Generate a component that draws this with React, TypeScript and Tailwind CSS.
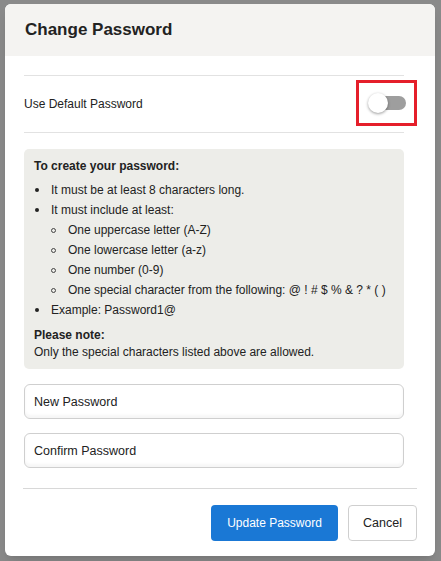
import { useState } from "react";

const rules: { text: string; level: 1 | 2 }[] = [
  { text: "It must be at least 8 characters long.", level: 1 },
  { text: "It must include at least:", level: 1 },
  { text: "One uppercase letter (A-Z)", level: 2 },
  { text: "One lowercase letter (a-z)", level: 2 },
  { text: "One number (0-9)", level: 2 },
  { text: "One special character from the following: @ ! # $ % & ? * ( )", level: 2 },
  { text: "Example: Password1@", level: 1 },
];

export default function App() {
  const [useDefault, setUseDefault] = useState(false);

  return (
    <div
      className="min-h-screen bg-[#8a8a8a] pt-[4px] pl-[5px]"
      style={{ fontFamily: '"Liberation Sans", Arial, sans-serif' }}
    >
      <div className="w-[430px] h-[552px] bg-white rounded-[6px] overflow-hidden flex flex-col shadow-lg">
        {/* Header */}
        <div className="h-[52px] shrink-0 bg-[#f4f3f1] flex items-center px-[20px]">
          <h2 className="text-[17px] font-bold text-[#222]">Change Password</h2>
        </div>

        {/* Body */}
        <div className="pl-[19px] pr-[31px] pt-[19px]">
          <div className="border-t border-b border-[#e2e2e2] h-[58px] flex items-center relative">
            <span className="text-[12px] text-[#222]">Use Default Password</span>
            <div className="absolute left-[332px] top-[4px] w-[61px] h-[46px] border-[3px] border-[#e51f2a] flex items-center justify-center">
              <button
                onClick={() => setUseDefault((v) => !v)}
                className="relative w-[35px] h-[14px] rounded-full bg-[#9e9e9e] ml-[4px]"
              >
                <span
                  className={`absolute top-1/2 -translate-y-1/2 w-[20px] h-[20px] rounded-full bg-white shadow-[0_1px_3px_rgba(0,0,0,0.4)] ${
                    useDefault ? "left-[22px]" : "left-[-3px]"
                  }`}
                />
              </button>
            </div>
          </div>

          {/* Rules */}
          <div className="mt-[16px] bg-[#edede9] rounded-[5px] px-[10px] pt-[9px] pb-[8px] text-[12px] text-[#222]">
            <div className="font-bold leading-[16px]">To create your password:</div>
            <ul className="mt-[6px]">
              {rules.map((r) => (
                <li key={r.text} className="flex items-center h-[20px]">
                  {r.level === 1 ? (
                    <span className="ml-[1px] mr-[12px] w-[4px] h-[4px] rounded-full bg-[#222]" />
                  ) : (
                    <span className="ml-[17px] mr-[12px] w-[5px] h-[5px] rounded-full border border-[#444]" />
                  )}
                  <span>{r.text}</span>
                </li>
              ))}
            </ul>
            <div className="mt-[7px] font-bold leading-[17px]">Please note:</div>
            <div className="leading-[17px]">Only the special characters listed above are allowed.</div>
          </div>

          {/* Inputs */}
          <input
            placeholder="New Password"
            className="mt-[15px] block w-full h-[35px] px-[9px] text-[12.5px] border border-[#cfcfcf] rounded-[6px] shadow-[inset_0_-3px_3px_rgba(0,0,0,0.04)] placeholder:text-[#222] outline-none"
          />
          <input
            placeholder="Confirm Password"
            className="mt-[14px] block w-full h-[35px] px-[9px] text-[12.5px] border border-[#cfcfcf] rounded-[6px] shadow-[inset_0_-3px_3px_rgba(0,0,0,0.04)] placeholder:text-[#222] outline-none"
          />
        </div>

        {/* Footer */}
        <div className="mx-[18px] mt-[20px] border-t border-[#d8d8d8] pt-[16px] flex justify-end gap-[10px]">
          <button className="h-[36px] w-[127px] rounded-[4px] bg-[#1a78d5] text-white text-[12px]">
            Update Password
          </button>
          <button className="h-[36px] w-[69px] rounded-[4px] bg-white border border-[#cfcfcf] text-[#222] text-[12.5px]">
            Cancel
          </button>
        </div>
      </div>
    </div>
  );
}
